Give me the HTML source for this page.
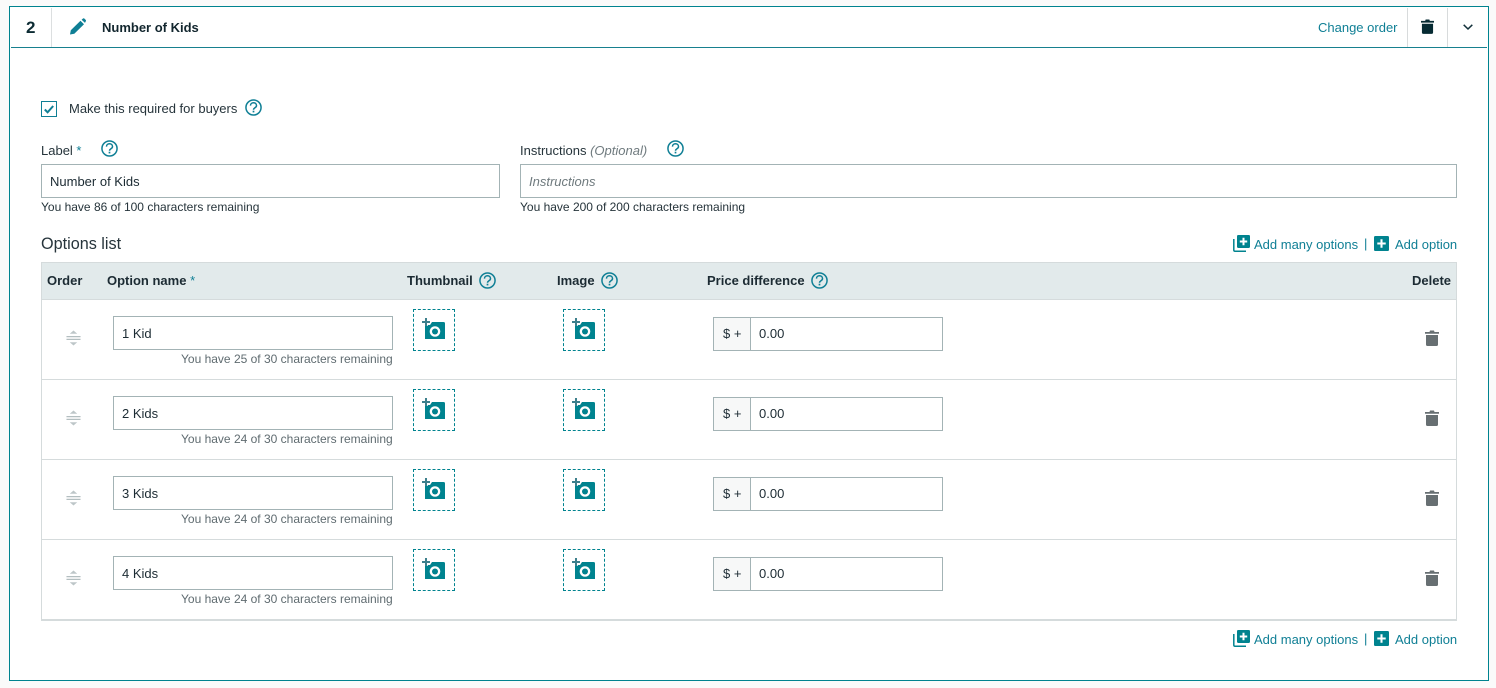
<!DOCTYPE html>
<html><head><meta charset="utf-8"><style>
html,body{margin:0;padding:0;width:1496px;height:688px;overflow:hidden;background:#fafafa;font-family:"Liberation Sans",Arial,sans-serif;color:#1c2b33;font-size:13px}
.a{position:absolute;white-space:nowrap}
.box{position:absolute;box-sizing:border-box;background:#fff}
.t{position:absolute;white-space:nowrap;line-height:16px}
.s{font-size:12px}
.link{color:#0f7f95}
.th{font-weight:bold;color:#1c2b33}
.inp{position:absolute;box-sizing:border-box;background:#fff;border:1px solid #a3b3b5;height:34px;line-height:32px;padding-left:8px;color:#1c2b33;white-space:nowrap}
.n{line-height:34px}
.hint{color:#5f6b70;font-size:12px}
svg{position:absolute;display:block;overflow:visible}
</style></head><body>
<svg width="0" height="0" style="position:absolute"><defs>
<symbol id="q" viewBox="0 0 18 18"><circle cx="9" cy="9" r="8" fill="none" stroke="#0f7f95" stroke-width="1.600"/><path d="M5.800 7C5.800 5.200 7.200 4 9 4s3.200 1.200 3.200 3c0 2.300-3.200 2.300-3.200 4.400" fill="none" stroke="#0f7f95" stroke-width="1.600"/><rect x="8.100" y="12.400" width="1.800" height="1.800" fill="#0f7f95"/></symbol>
<symbol id="cam" viewBox="0 0 24 24"><path d="M3 7H8L10 4H21.500A1.500 1.500 0 0 1 23 5.500V21H3Z" fill="#00838f"/><circle cx="13" cy="13.500" r="5.300" fill="#fff"/><circle cx="13" cy="13.500" r="3" fill="#00838f"/><path d="M4 0V8M0 4H8" stroke="#fff" stroke-width="3.500"/><path d="M4 0V8M0 4H8" stroke="#3d7f8c" stroke-width="2"/></symbol>
<symbol id="trash" viewBox="0 0 14 16"><path d="M1 5H13V14.500A1.500 1.500 0 0 1 11.500 16H2.500A1.500 1.500 0 0 1 1 14.500ZM0 2H4.500L5 .5H9L9.500 2H14V3.800H0Z" fill="currentColor"/></symbol>
<symbol id="plus" viewBox="0 0 16 16"><rect width="16" height="16" rx="1.500" fill="#00838f"/><path d="M8 3.500V12.500M3.500 8H12.500" stroke="#fff" stroke-width="2.200"/></symbol>
<symbol id="plusm" viewBox="0 0 17 17"><path d="M.8 4V15Q.8 16.200 2 16.200H13" fill="none" stroke="#00838f" stroke-width="1.500"/><rect x="4" y="0" width="13" height="13" rx="1.200" fill="#00838f"/><path d="M10.500 2.800V10.200M6.800 6.500H14.200" stroke="#fff" stroke-width="2"/></symbol>
<symbol id="drag" viewBox="0 0 16 16"><path d="M8 0L12 3.500H4ZM8 16L12 12.500H4Z" fill="#bdc6c8"/><path d="M.5 6.500H15.500M.5 9.500H15.500" stroke="#b3bec0" stroke-width="1.300"/></symbol>
</defs></svg>

<div class="box" style="left:9px;top:6px;width:1480px;height:675px;border:1px solid #00838f"></div>
<div class="a" style="left:11px;top:47px;width:1476px;height:1px;background:#17808f"></div>
<div class="a" style="left:51px;top:8px;width:1px;height:39px;background:#dcdfe0"></div>
<div class="a" style="left:1407px;top:8px;width:1px;height:39px;background:#d8dbdc"></div>
<div class="a" style="left:1447px;top:8px;width:1px;height:39px;background:#d8dbdc"></div>
<div class="t" style="left:26px;top:18px;font-size:17px;line-height:20px;font-weight:bold;color:#0c2b33">2</div>
<svg style="left:69px;top:18px" width="18" height="17" viewBox="0 0 18 17"><path d="M1 16.500L1.800 12.200 11.500 2.800 15 6.300 5.300 15.700ZM12.600 1.700L14 .5Q14.700 0 15.300.5L16.800 2Q17.300 2.700 16.800 3.300L16 4.900Z" fill="#0f7f95"/></svg>
<div class="t" style="left:102px;top:20px;font-weight:bold;color:#12262e">Number of Kids</div>
<div class="t link" style="left:1318px;top:20px">Change order</div>
<svg style="left:1421px;top:19px;color:#062b33" width="13" height="15"><use href="#trash"/></svg>
<svg style="left:1463px;top:24px" width="10" height="6" viewBox="0 0 10 6"><path d="M.7.8L5 5 9.300.8" fill="none" stroke="#12303a" stroke-width="1.500"/></svg>

<div class="box" style="left:41px;top:101px;width:16px;height:16px;border:1px solid #0f7f95"></div>
<svg style="left:44px;top:105px" width="10" height="9" viewBox="0 0 10 9"><path d="M.8 4.500L3.600 7.300 9.200 1" fill="none" stroke="#0f7f95" stroke-width="2"/></svg>
<div class="t" style="left:69px;top:101px;color:#26343b">Make this required for buyers</div>
<svg style="left:245px;top:99px" width="17" height="17"><use href="#q"/></svg>

<div class="t" style="left:41px;top:143px;color:#26343b">Label <span class="link">*</span></div>
<svg style="left:101px;top:140px" width="17" height="17"><use href="#q"/></svg>
<div class="inp n" style="left:41px;top:164px;width:459px">Number of Kids</div>
<div class="t s" style="left:41px;top:199px;color:#26343b">You have 86 of 100 characters remaining</div>

<div class="t" style="left:520px;top:143px;color:#26343b">Instructions <i style="color:#6f7a7e">(Optional)</i></div>
<svg style="left:667px;top:140px" width="17" height="17"><use href="#q"/></svg>
<div class="inp n" style="left:520px;top:164px;width:937px;color:#6f7a7e;font-style:italic">Instructions</div>
<div class="t s" style="left:520px;top:199px;color:#26343b">You have 200 of 200 characters remaining</div>

<div class="t" style="left:41px;top:235px;font-size:16.200px;line-height:18px;color:#26343b">Options list</div>
<svg style="left:1233px;top:235px" width="17" height="17"><use href="#plusm"/></svg>
<div class="t link" style="left:1254px;top:237px">Add many options</div>
<div class="t link" style="left:1364px;top:236px">|</div>
<svg style="left:1374px;top:236px" width="15" height="15"><use href="#plus"/></svg>
<div class="t link" style="left:1395px;top:237px">Add option</div>

<div class="box" style="left:41px;top:262px;width:1416px;height:359px;border:1px solid #d5dbdc"></div>
<div class="a" style="left:42px;top:263px;width:1414px;height:36px;background:#e2eaeb"></div>
<div class="a" style="left:42px;top:299px;width:1414px;height:1px;background:#d5dbdc"></div>
<div class="a" style="left:42px;top:379px;width:1414px;height:1px;background:#d5dbdc"></div>
<div class="a" style="left:42px;top:459px;width:1414px;height:1px;background:#d5dbdc"></div>
<div class="a" style="left:42px;top:539px;width:1414px;height:1px;background:#d5dbdc"></div>
<div class="a" style="left:42px;top:619px;width:1414px;height:1px;background:#d5dbdc"></div>

<div class="t th" style="left:47px;top:273px">Order</div>
<div class="t th" style="left:107px;top:273px">Option name <span class="link" style="font-weight:normal">*</span></div>
<div class="t th" style="left:407px;top:273px">Thumbnail</div>
<svg style="left:479px;top:272px" width="17" height="17"><use href="#q"/></svg>
<div class="t th" style="left:557px;top:273px">Image</div>
<svg style="left:601px;top:272px" width="17" height="17"><use href="#q"/></svg>
<div class="t th" style="left:707px;top:273px">Price difference</div>
<svg style="left:811px;top:272px" width="17" height="17"><use href="#q"/></svg>
<div class="t th" style="left:1412px;top:273px">Delete</div>

<!-- row 1 -->
<svg style="left:66px;top:330px" width="15" height="16"><use href="#drag"/></svg>
<div class="inp n" style="left:113px;top:316px;width:280px">1 Kid</div>
<div class="t hint" style="left:181px;top:351px">You have 25 of 30 characters remaining</div>
<div class="box" style="left:413px;top:309px;width:42px;height:42px;border:1px dashed #00838f"></div>
<svg style="left:422px;top:318px" width="24" height="24"><use href="#cam"/></svg>
<div class="box" style="left:563px;top:309px;width:42px;height:42px;border:1px dashed #00838f"></div>
<svg style="left:572px;top:318px" width="24" height="24"><use href="#cam"/></svg>
<div class="inp" style="left:713px;top:317px;width:38px;background:#f7f8f8;padding-left:9px">$ +</div>
<div class="inp" style="left:750px;top:317px;width:193px">0.00</div>
<svg style="left:1425px;top:330px;color:#676f72" width="14" height="16"><use href="#trash"/></svg>

<!-- row 2 -->
<svg style="left:66px;top:410px" width="15" height="16"><use href="#drag"/></svg>
<div class="inp n" style="left:113px;top:396px;width:280px">2 Kids</div>
<div class="t hint" style="left:181px;top:431px">You have 24 of 30 characters remaining</div>
<div class="box" style="left:413px;top:389px;width:42px;height:42px;border:1px dashed #00838f"></div>
<svg style="left:422px;top:398px" width="24" height="24"><use href="#cam"/></svg>
<div class="box" style="left:563px;top:389px;width:42px;height:42px;border:1px dashed #00838f"></div>
<svg style="left:572px;top:398px" width="24" height="24"><use href="#cam"/></svg>
<div class="inp" style="left:713px;top:397px;width:38px;background:#f7f8f8;padding-left:9px">$ +</div>
<div class="inp" style="left:750px;top:397px;width:193px">0.00</div>
<svg style="left:1425px;top:410px;color:#676f72" width="14" height="16"><use href="#trash"/></svg>

<!-- row 3 -->
<svg style="left:66px;top:490px" width="15" height="16"><use href="#drag"/></svg>
<div class="inp n" style="left:113px;top:476px;width:280px">3 Kids</div>
<div class="t hint" style="left:181px;top:511px">You have 24 of 30 characters remaining</div>
<div class="box" style="left:413px;top:469px;width:42px;height:42px;border:1px dashed #00838f"></div>
<svg style="left:422px;top:478px" width="24" height="24"><use href="#cam"/></svg>
<div class="box" style="left:563px;top:469px;width:42px;height:42px;border:1px dashed #00838f"></div>
<svg style="left:572px;top:478px" width="24" height="24"><use href="#cam"/></svg>
<div class="inp" style="left:713px;top:477px;width:38px;background:#f7f8f8;padding-left:9px">$ +</div>
<div class="inp" style="left:750px;top:477px;width:193px">0.00</div>
<svg style="left:1425px;top:490px;color:#676f72" width="14" height="16"><use href="#trash"/></svg>

<!-- row 4 -->
<svg style="left:66px;top:570px" width="15" height="16"><use href="#drag"/></svg>
<div class="inp n" style="left:113px;top:556px;width:280px">4 Kids</div>
<div class="t hint" style="left:181px;top:591px">You have 24 of 30 characters remaining</div>
<div class="box" style="left:413px;top:549px;width:42px;height:42px;border:1px dashed #00838f"></div>
<svg style="left:422px;top:558px" width="24" height="24"><use href="#cam"/></svg>
<div class="box" style="left:563px;top:549px;width:42px;height:42px;border:1px dashed #00838f"></div>
<svg style="left:572px;top:558px" width="24" height="24"><use href="#cam"/></svg>
<div class="inp" style="left:713px;top:557px;width:38px;background:#f7f8f8;padding-left:9px">$ +</div>
<div class="inp" style="left:750px;top:557px;width:193px">0.00</div>
<svg style="left:1425px;top:570px;color:#676f72" width="14" height="16"><use href="#trash"/></svg>

<svg style="left:1233px;top:630px" width="17" height="17"><use href="#plusm"/></svg>
<div class="t link" style="left:1254px;top:632px">Add many options</div>
<div class="t link" style="left:1364px;top:631px">|</div>
<svg style="left:1374px;top:631px" width="15" height="15"><use href="#plus"/></svg>
<div class="t link" style="left:1395px;top:632px">Add option</div>
</body></html>
